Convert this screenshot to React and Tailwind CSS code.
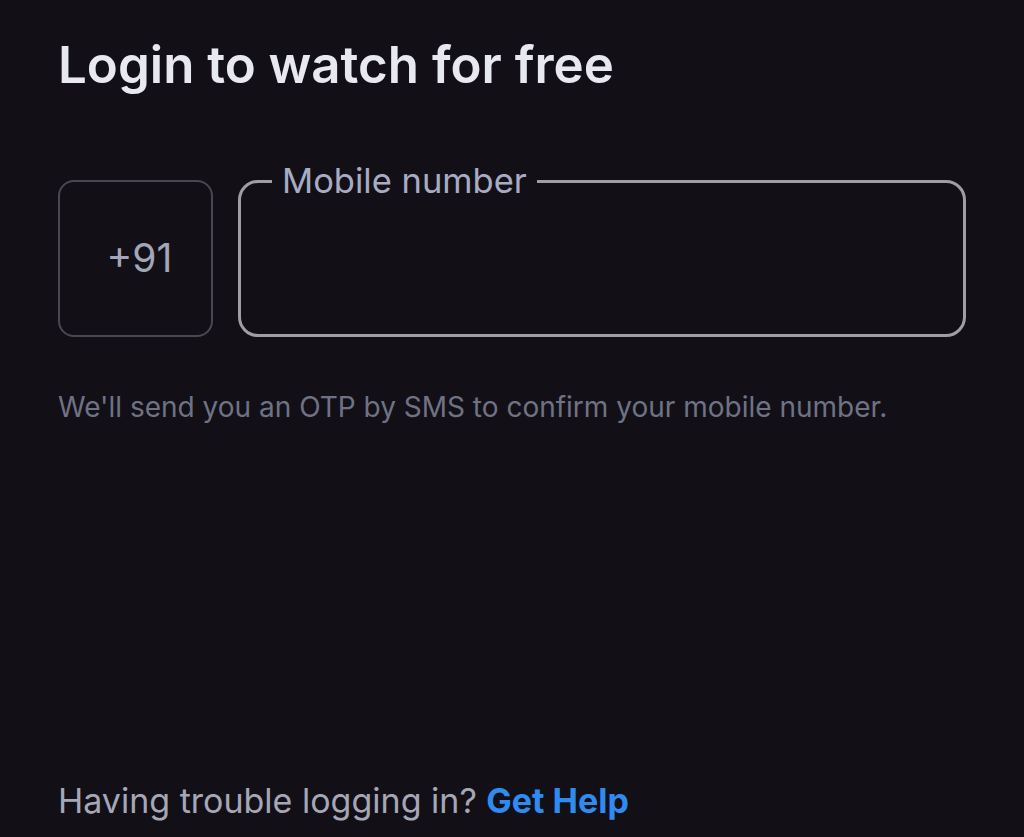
export default function App() {
  return (
    <div className="h-[837px] w-full bg-[#121016] flex flex-col px-[58px]" style={{ fontFamily: "Inter, 'Noto Sans', sans-serif" }}>
      <h1 className="mt-[35px] text-[51px] leading-[60px] font-semibold text-[#e8e9f0]">Login to watch for free</h1>
      <div className="mt-[64px] flex gap-[25px] items-end">
        <div className="w-[155px] h-[157px] pl-[8px] rounded-[16px] border-2 border-[#4a4750] flex items-center justify-center text-[39px] text-[#a3a6b8]">+91</div>
        <fieldset className="flex-1 h-[178px] border-[3px] border-[#a09da4] rounded-[20px] px-[31px]">
          <legend className="px-[10px] text-[34.5px] leading-[44px] text-[#a7acc4]">Mobile number</legend>
          <input className="w-full bg-transparent outline-none text-[30px] text-[#e8e9f0]" aria-label="Mobile number" />
        </fieldset>
      </div>
      <p className="mt-[52px] text-[28px] leading-[36px] text-[#6f7285]">We'll send you an OTP by SMS to confirm your mobile number.</p>
      <p className="mt-auto mb-[16px] text-[34px] leading-[40px] text-[#a5a7b6]">
        Having trouble logging in? <a href="#" className="font-bold text-[#2f8bf0]">Get Help</a>
      </p>
    </div>
  );
}
